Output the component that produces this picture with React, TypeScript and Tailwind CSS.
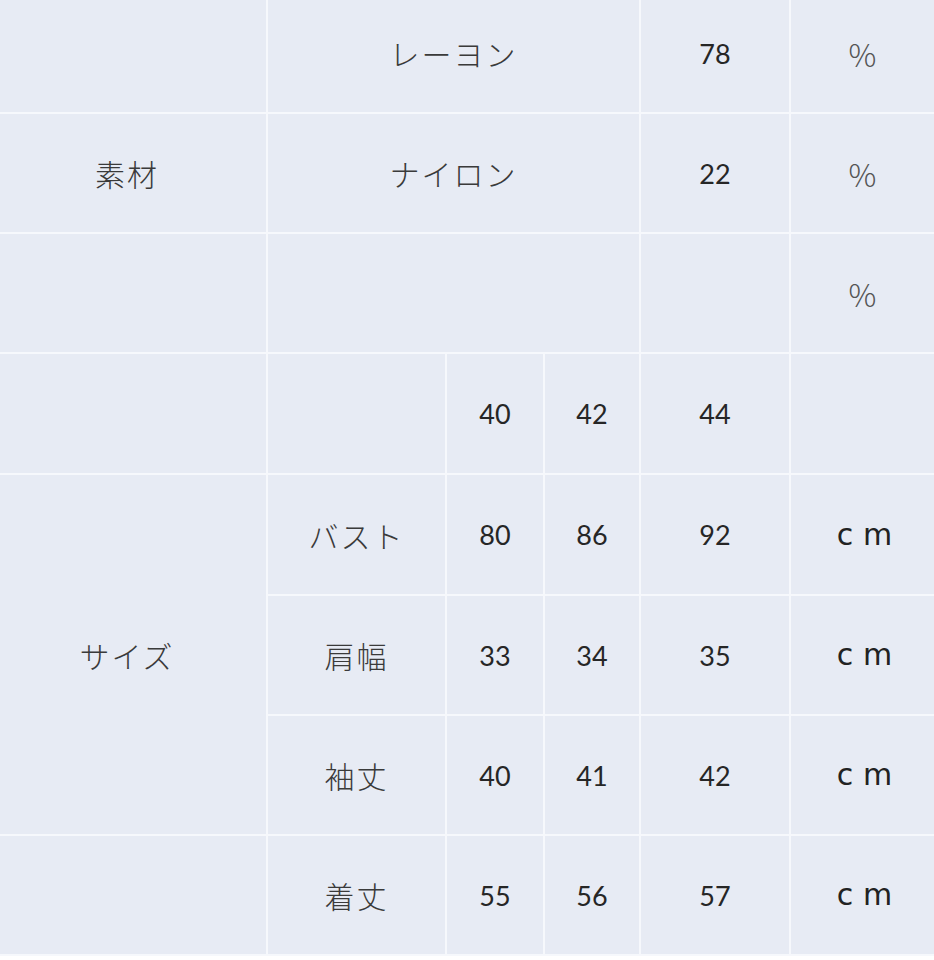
import React from "react";

const jp = "font-['Noto_Sans_CJK_JP',sans-serif] font-light text-[30px] text-[#3a3a3a] tracking-[2px]";
const num = "font-['Lato','Open_Sans',sans-serif] text-[27px] text-[#262626]";
const pct = "font-['Noto_Sans_CJK_JP',sans-serif] font-light text-[31px] text-[#555555]";
const cm = "font-['DejaVu_Sans',sans-serif] text-[30px] text-[#222222]";

function Cell({
  className = "",
  children,
}: {
  className?: string;
  children?: React.ReactNode;
}) {
  return (
    <div className={`bg-[#e7ebf4] flex items-center justify-center leading-none ${className}`}>
      {children}
    </div>
  );
}

export default function App() {
  const sizeRows = [
    { label: "バスト", v: ["80", "86", "92"] },
    { label: "肩幅", v: ["33", "34", "35"] },
    { label: "袖丈", v: ["40", "41", "42"] },
  ];
  return (
    <div className="w-[934px] h-[960px] bg-white">
      <div className="grid grid-cols-[266px_177px_96px_94px_148px_143px] grid-rows-[112px_118px_118px_119px_119px_118px_118px_118px] gap-[2px] pb-[2px] bg-[#f6f8fc]">
        {/* Row 1 */}
        <Cell className="pb-[6px]" />
        <Cell className={`col-span-3 pb-[6px] ${jp}`}>レーヨン</Cell>
        <Cell className={`pb-[6px] ${num} text-[#111111]`}>78</Cell>
        <Cell className={`pb-[6px] ${pct}`}>%</Cell>
        {/* Row 2 */}
        <Cell className={`pr-[12px] ${jp}`}>素材</Cell>
        <Cell className={`col-span-3 ${jp}`}>ナイロン</Cell>
        <Cell className={`${num} text-[#111111]`}>22</Cell>
        <Cell className={pct}>%</Cell>
        {/* Row 3 */}
        <Cell />
        <Cell className="col-span-3" />
        <Cell />
        <Cell className={pct}>%</Cell>
        {/* Row 4 */}
        <Cell />
        <Cell />
        <Cell className={num}>40</Cell>
        <Cell className={num}>42</Cell>
        <Cell className={num}>44</Cell>
        <Cell />
        {/* Rows 5-7 */}
        {sizeRows.map((r, i) => (
          <React.Fragment key={r.label}>
            {i === 0 && <Cell className={`row-span-3 pr-[12px] ${jp}`}>サイズ</Cell>}
            <Cell className={jp}>{r.label}</Cell>
            <Cell className={num}>{r.v[0]}</Cell>
            <Cell className={num}>{r.v[1]}</Cell>
            <Cell className={num}>{r.v[2]}</Cell>
            <Cell className={`pl-[4px] ${cm}`}>c m</Cell>
          </React.Fragment>
        ))}
        {/* Row 8 */}
        <Cell />
        <Cell className={jp}>着丈</Cell>
        <Cell className={num}>55</Cell>
        <Cell className={num}>56</Cell>
        <Cell className={num}>57</Cell>
        <Cell className={`pl-[4px] ${cm}`}>c m</Cell>
      </div>
    </div>
  );
}
